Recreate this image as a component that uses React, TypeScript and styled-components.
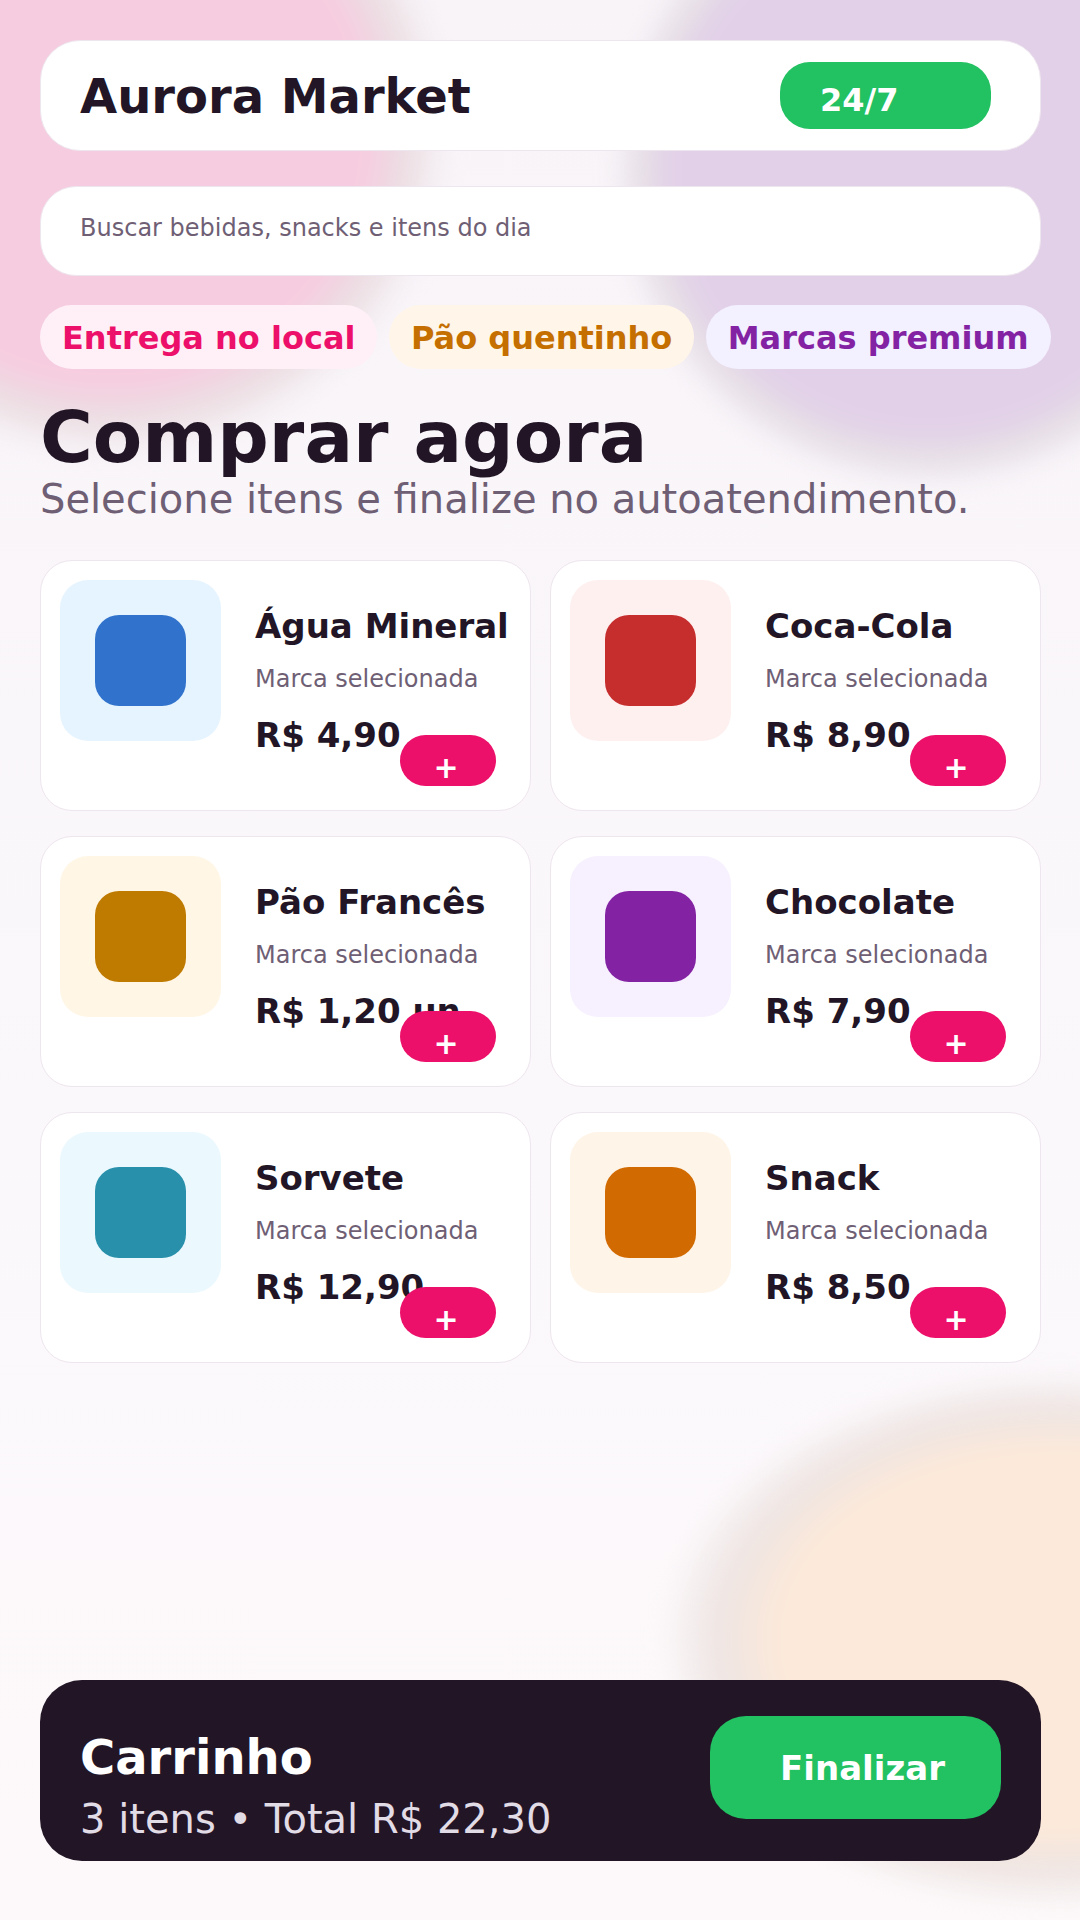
import styled, { createGlobalStyle } from "styled-components";

type Product = {
  name: string;
  price: string;
  tint: string;
  color: string;
};

const products: Product[] = [
  { name: "Água Mineral", price: "R$ 4,90", tint: "#e6f4ff", color: "#3173cc" },
  { name: "Coca-Cola", price: "R$ 8,90", tint: "#fff0f0", color: "#c62d2d" },
  { name: "Pão Francês", price: "R$ 1,20 un", tint: "#fff6e6", color: "#bf7a00" },
  { name: "Chocolate", price: "R$ 7,90", tint: "#f7f0ff", color: "#8323a3" },
  { name: "Sorvete", price: "R$ 12,90", tint: "#ebf9ff", color: "#2890ab" },
  { name: "Snack", price: "R$ 8,50", tint: "#fff4e8", color: "#d16a00" },
];

export default function App() {
  return (
    <Page>
      <GlobalStyle />
      <PinkBlob />
      <LilacBlob />
      <PeachBlob />
      <Header>
        <Brand>Aurora Market</Brand>
        <OpenBadge>24/7</OpenBadge>
      </Header>
      <Search>Buscar bebidas, snacks e itens do dia</Search>
      <Chips>
        <Chip $bg="#fff0f7" $color="#ec106a">Entrega no local</Chip>
        <Chip $bg="#fff5e8" $color="#c46f00">Pão quentinho</Chip>
        <Chip $bg="#f3f0ff" $color="#8323a3">Marcas premium</Chip>
      </Chips>
      <Title>Comprar agora</Title>
      <Subtitle>Selecione itens e finalize no autoatendimento.</Subtitle>
      <Grid>
        {products.map((item) => (
          <Card key={item.name}>
            <Thumb $bg={item.tint}>
              <Swatch $bg={item.color} />
            </Thumb>
            <Info>
              <Name>{item.name}</Name>
              <Brandline>Marca selecionada</Brandline>
              <Price>{item.price}</Price>
            </Info>
            <AddButton>+</AddButton>
          </Card>
        ))}
      </Grid>
      <Cart>
        <CartInfo>
          <CartTitle>Carrinho</CartTitle>
          <CartTotal>3 itens • Total R$ 22,30</CartTotal>
        </CartInfo>
        <Checkout>Finalizar</Checkout>
      </Cart>
    </Page>
  );
}

const GlobalStyle = createGlobalStyle`
  html, body {
    margin: 0;
    padding: 0;
  }
  body {
    font-family: "DejaVu Sans", sans-serif;
    color: #221626;
  }
`;

const Page = styled.div`
  position: relative;
  display: flex;
  flex-direction: column;
  width: 1080px;
  height: 1920px;
  padding: 40px 39px 59px 40px;
  box-sizing: border-box;
  overflow: hidden;
  background: linear-gradient(180deg, #f8f4f8 0%, #fbf8fc 60%, #fdf9fa 100%);
`;

const Blob = styled.div`
  position: absolute;
  filter: blur(10px);
`;

const PinkBlob = styled(Blob)`
  left: -230px;
  top: -200px;
  width: 680px;
  height: 660px;
  background: radial-gradient(
    closest-side,
    #f6cde0 0 76%,
    #ebdfe3 88%,
    rgba(248, 244, 248, 0) 100%
  );
`;

const LilacBlob = styled(Blob)`
  left: 610px;
  top: -150px;
  width: 640px;
  height: 640px;
  background: radial-gradient(
    closest-side,
    #e2d0e8 0 80%,
    #e6dfe6 90%,
    rgba(248, 244, 248, 0) 100%
  );
`;

const PeachBlob = styled(Blob)`
  left: 660px;
  top: 1370px;
  width: 800px;
  height: 540px;
  background: radial-gradient(
    closest-side,
    #fde9d9 0 68%,
    #eee5e3 86%,
    rgba(250, 246, 248, 0) 100%
  );
`;

const Header = styled.header`
  position: relative;
  display: flex;
  align-items: center;
  justify-content: space-between;
  height: 111px;
  padding: 0 49px 0 39px;
  box-sizing: border-box;
  background: #fff;
  border: 1px solid #eee6ee;
  border-radius: 40px;
`;

const Brand = styled.h1`
  margin: 0;
  font-size: 48px;
  font-weight: 700;
`;

const OpenBadge = styled.div`
  width: 211px;
  height: 67px;
  padding: 19px 0 0 40px;
  box-sizing: border-box;
  border-radius: 30px;
  background: #22c162;
  color: #fff;
  font-size: 32px;
  font-weight: 700;
  line-height: 38px;
`;

const Search = styled.div`
  position: relative;
  height: 90px;
  margin-top: 35px;
  padding: 27px 39px 0;
  box-sizing: border-box;
  background: #fff;
  border: 1px solid #eee6ee;
  border-radius: 36px;
  color: #6f5f75;
  font-size: 24px;
  line-height: 28px;
`;

const Chips = styled.div`
  position: relative;
  display: flex;
  gap: 11.5px;
  margin-top: 29px;
`;

const Chip = styled.div<{ $bg: string; $color: string }>`
  flex: none;
  height: 64px;
  padding: 0 22px;
  border-radius: 32px;
  background: ${({ $bg }) => $bg};
  color: ${({ $color }) => $color};
  font-size: 32px;
  font-weight: 700;
  line-height: 66px;
  white-space: nowrap;
`;

const Title = styled.h2`
  position: relative;
  margin: 30px 0 0;
  font-size: 72px;
  font-weight: 700;
  line-height: 76px;
`;

const Subtitle = styled.p`
  position: relative;
  margin: 0;
  color: #6f5f75;
  font-size: 40px;
  line-height: 48px;
`;

const Grid = styled.div`
  position: relative;
  display: grid;
  grid-template-columns: 491px 491px;
  grid-auto-rows: 251px;
  gap: 25px 19px;
  margin-top: 37px;
`;

const Card = styled.article`
  position: relative;
  display: flex;
  padding: 19px;
  background: #fff;
  border: 1px solid #eee6ee;
  border-radius: 32px;
`;

const Thumb = styled.div<{ $bg: string }>`
  display: flex;
  align-items: center;
  justify-content: center;
  flex: none;
  width: 161px;
  height: 161px;
  border-radius: 28px;
  background: ${({ $bg }) => $bg};
`;

const Swatch = styled.div<{ $bg: string }>`
  width: 91px;
  height: 91px;
  border-radius: 24px;
  background: ${({ $bg }) => $bg};
`;

const Info = styled.div`
  margin-left: 34px;
  padding-top: 26px;
  white-space: nowrap;
`;

const Name = styled.h3`
  margin: 0;
  font-size: 34px;
  font-weight: 700;
  line-height: 40px;
`;

const Brandline = styled.p`
  margin: 19px 0 0;
  color: #6f5f75;
  font-size: 24px;
  line-height: 28px;
`;

const Price = styled.p`
  margin: 22px 0 0;
  font-size: 34px;
  font-weight: 700;
  line-height: 40px;
`;

const AddButton = styled.button`
  position: absolute;
  left: 359px;
  top: 174px;
  width: 96px;
  height: 51px;
  padding: 14px 4px 0 0;
  border: 0;
  border-radius: 26px;
  background: #ec106a;
  color: #fff;
  font-family: inherit;
  font-size: 30px;
  font-weight: 700;
  line-height: 36px;
`;

const Cart = styled.footer`
  position: relative;
  display: flex;
  align-items: center;
  justify-content: space-between;
  height: 181px;
  margin-top: auto;
  padding: 0 40px;
  box-sizing: border-box;
  background: #221626;
  border-radius: 42px;
`;

const CartInfo = styled.div`
  display: flex;
  flex-direction: column;
  padding-top: 30px;
`;

const CartTitle = styled.strong`
  color: #fff;
  font-size: 48px;
  line-height: 56px;
`;

const CartTotal = styled.span`
  margin-top: 10px;
  color: #e2dce6;
  font-size: 40px;
  line-height: 48px;
`;

const Checkout = styled.button`
  width: 291px;
  height: 103px;
  margin-bottom: 6px;
  padding: 0 2px 0 16px;
  border: 0;
  border-radius: 36px;
  background: #22c162;
  color: #fff;
  font-family: inherit;
  font-size: 34px;
  font-weight: 700;
`;
